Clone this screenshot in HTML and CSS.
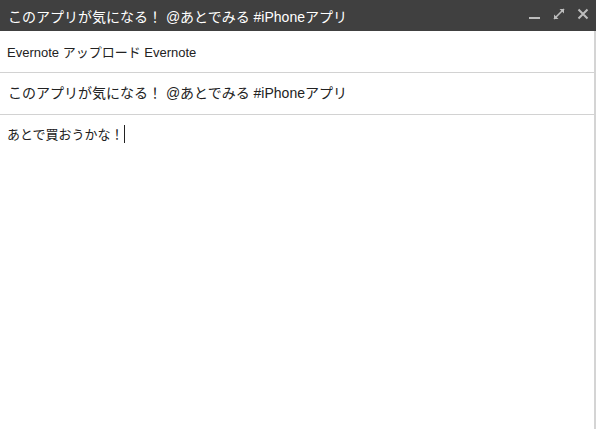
FILE: index.html
```html
<!DOCTYPE html>
<html lang="ja">
<head>
    <meta charset="UTF-8">
    <title>このアプリが気になる！ @あとでみる #iPhoneアプリ</title>
    <link rel="stylesheet" href="styles.css">
</head>
<body>
    <div class="window">
        <div class="titlebar">
            <div class="title">このアプリが気になる！ @あとでみる #iPhoneアプリ</div>
            <div class="controls">
                <svg class="icon" width="12" height="12" viewBox="0 0 12 12">
                    <rect x="0" y="9" width="11" height="2" fill="#bdbdbd"/>
                </svg>
                <svg class="icon" width="12" height="12" viewBox="0 0 12 12">
                    <path d="M1 11 L11 1" stroke="#bdbdbd" stroke-width="1.6"/>
                    <path d="M6.5 1 H11 V5.5 Z" fill="#bdbdbd"/>
                    <path d="M1 6.5 V11 H5.5 Z" fill="#bdbdbd"/>
                </svg>
                <svg class="icon" width="12" height="12" viewBox="0 0 12 12">
                    <path d="M1.5 1.5 L10.5 10.5 M10.5 1.5 L1.5 10.5" stroke="#bdbdbd" stroke-width="2"/>
                </svg>
            </div>
        </div>
        <div class="panel">
            <div class="row row-source">Evernote アップロード Evernote</div>
            <div class="row">このアプリが気になる！ @あとでみる #iPhoneアプリ</div>
            <div class="message">あとで買おうかな！<span class="caret"></span></div>
        </div>
    </div>
</body>
</html>
```

FILE: styles.css
```css
* {
    margin: 0;
    padding: 0;
    box-sizing: border-box;
}
html, body {
    height: 100%;
}
body {
    font-family: "Liberation Sans", "Noto Sans CJK JP", sans-serif;
    font-size: 14px;
    color: #222222;
    background-color: #ffffff;
}
.window {
    display: flex;
    flex-direction: column;
    height: 100%;
}
.titlebar {
    display: flex;
    align-items: center;
    justify-content: space-between;
    height: 31px;
    background-color: #404040;
    padding-left: 8px;
    padding-right: 7px;
}
.title {
    color: #ffffff;
    font-size: 14px;
}
.controls {
    display: flex;
    gap: 12px;
    align-items: center;
    margin-top: -3px;
}
.icon {
    display: block;
}
.panel {
    flex: 1;
    width: 596px;
    border-right: 2px solid #d4d4d4;
}
.row {
    height: 42px;
    line-height: 41px;
    padding-left: 8px;
    border-bottom: 1px solid #d2d2d2;
}
.row-source {
    font-size: 13px;
    padding-left: 7px;
    line-height: 44px;
}
.message {
    font-size: 13px;
    padding-left: 7px;
    padding-top: 10px;
    line-height: 20px;
}
.caret {
    display: inline-block;
    width: 1px;
    height: 18px;
    background-color: #222222;
    vertical-align: -4px;
}
```
